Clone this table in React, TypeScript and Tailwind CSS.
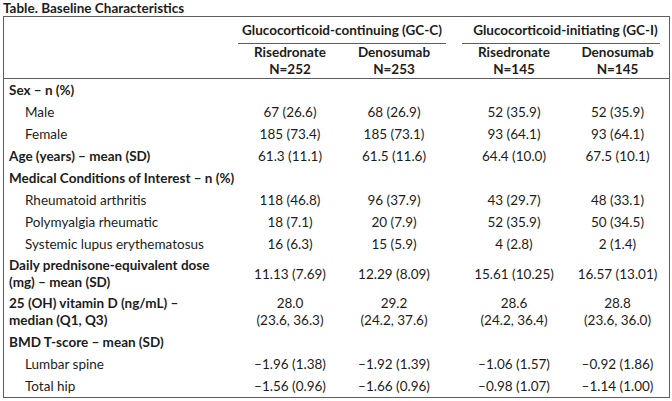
import React from "react";

type Row = {
  label: React.ReactNode;
  bold?: boolean;
  indent?: boolean;
  tall?: boolean;
  vals?: React.ReactNode[];
};

const rows: Row[] = [
  { label: "Sex – n (%)", bold: true },
  { label: "Male", indent: true, vals: ["67 (26.6)", "68 (26.9)", "52 (35.9)", "52 (35.9)"] },
  { label: "Female", indent: true, vals: ["185 (73.4)", "185 (73.1)", "93 (64.1)", "93 (64.1)"] },
  { label: "Age (years) – mean (SD)", bold: true, vals: ["61.3 (11.1)", "61.5 (11.6)", "64.4 (10.0)", "67.5 (10.1)"] },
  { label: "Medical Conditions of Interest – n (%)", bold: true },
  { label: "Rheumatoid arthritis", indent: true, vals: ["118 (46.8)", "96 (37.9)", "43 (29.7)", "48 (33.1)"] },
  { label: "Polymyalgia rheumatic", indent: true, vals: ["18 (7.1)", "20 (7.9)", "52 (35.9)", "50 (34.5)"] },
  { label: "Systemic lupus erythematosus", indent: true, vals: ["16 (6.3)", "15 (5.9)", "4 (2.8)", "2 (1.4)"] },
  {
    label: (
      <>
        Daily prednisone-equivalent dose
        <br />
        (mg) – mean (SD)
      </>
    ),
    bold: true,
    tall: true,
    vals: ["11.13 (7.69)", "12.29 (8.09)", "15.61 (10.25)", "16.57 (13.01)"],
  },
  {
    label: (
      <>
        25 (OH) vitamin D (ng/mL) –
        <br />
        median (Q1, Q3)
      </>
    ),
    bold: true,
    tall: true,
    vals: [
      <>28.0<br />(23.6, 36.3)</>,
      <>29.2<br />(24.2, 37.6)</>,
      <>28.6<br />(24.2, 36.4)</>,
      <>28.8<br />(23.6, 36.0)</>,
    ],
  },
  { label: "BMD T-score – mean (SD)", bold: true },
  { label: "Lumbar spine", indent: true, vals: ["–1.96 (1.38)", "–1.92 (1.39)", "–1.06 (1.57)", "–0.92 (1.86)"] },
  { label: "Total hip", indent: true, vals: ["–1.56 (0.96)", "–1.66 (0.96)", "–0.98 (1.07)", "–1.14 (1.00)"] },
];

const cols = "grid grid-cols-[234px_104px_104px_16px_104px_103px]";

export default function App() {
  return (
    <div
      className="w-[672px] h-[401px] bg-white text-[#1c1c1c] text-[13.5px]"
      style={{ fontFamily: "Lato, 'Open Sans', sans-serif" }}
    >
      {/* Title */}
      <div className="h-4 pl-[3px] leading-4 font-bold">Table. Baseline Characteristics</div>

      <div className="ml-[3px] w-[667px] border border-[#5e5e5e]">
        {/* Group header */}
        <div className={`${cols} h-[27px]`}>
          <div />
          <div className="col-span-2 flex items-center justify-center border-b border-[#5e5e5e] font-bold">
            Glucocorticoid-continuing (GC-C)
          </div>
          <div />
          <div className="col-span-2 relative flex items-center justify-center font-bold">
            Glucocorticoid-initiating (GC-I)
            <div className="absolute left-0 right-[9px] bottom-0 border-b border-[#5e5e5e]" />
          </div>
        </div>

        {/* Arm header */}
        <div className={`${cols} h-[35px] border-b border-[#5e5e5e] font-bold leading-[17px]`}>
          <div />
          <div className="flex flex-col items-center justify-center">
            <span>Risedronate</span>
            <span>N=252</span>
          </div>
          <div className="flex flex-col items-center justify-center">
            <span>Denosumab</span>
            <span>N=253</span>
          </div>
          <div />
          <div className="flex flex-col items-center justify-center">
            <span>Risedronate</span>
            <span>N=145</span>
          </div>
          <div className="flex flex-col items-center justify-center">
            <span>Denosumab</span>
            <span>N=145</span>
          </div>
        </div>

        {/* Body */}
        {rows.map((r, i) => (
          <div key={i} className={`${cols} ${r.tall ? "h-[38px]" : "h-[22px]"} leading-[17px]`}>
            <div className={`flex items-center ${r.indent ? "pl-[21px]" : "pl-[5px]"} ${r.bold ? "font-bold" : ""}`}>
              <span>{r.label}</span>
            </div>
            {[0, 1, 2, 3].map((j) => (
              <React.Fragment key={j}>
                {j === 2 && <div />}
                <div className="flex items-center justify-center text-center">
                  <span>{r.vals ? r.vals[j] : ""}</span>
                </div>
              </React.Fragment>
            ))}
          </div>
        ))}
      </div>
    </div>
  );
}
